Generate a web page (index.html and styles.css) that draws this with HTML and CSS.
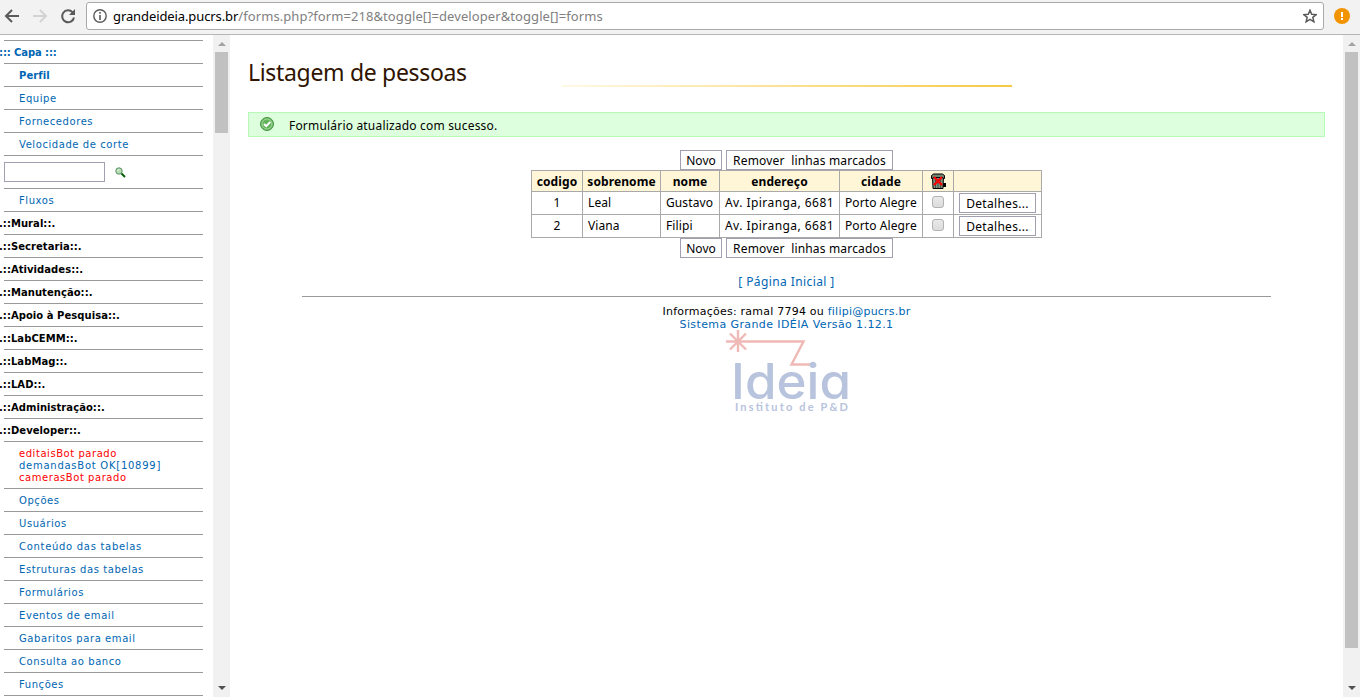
FILE: index.html
```html
<!DOCTYPE html>
<html lang="pt-BR">
<head>
<meta charset="utf-8">
<title>Listagem de pessoas</title>
<link rel="stylesheet" href="styles.css">
</head>
<body>
<header class="toolbar">
  <svg class="nav-icons" width="86" height="34" fill="none" stroke="#5a5a5a" stroke-width="2">
    <path d="M19 16H6.500M12 10L6 16l6 6"/>
    <path stroke="#d3d3d3" d="M33 16h12.500M40 10l6 6-6 6"/>
    <path d="M72.600 12.300A6 6 0 1 0 74 17.500"/>
    <path d="M75 9v6h-6z" fill="#5a5a5a" stroke="none"/>
  </svg>
  <div class="address">
    <svg class="info" width="14" height="14" fill="none" stroke="#5a5a5a"><circle cx="7" cy="7" r="6.200" stroke-width="1.400"/><path stroke-width="1.600" d="M7 6v5M7 3v1.700"/></svg>
    <span class="url"><span class="host">grandeideia.pucrs.br</span><span class="path">/forms.php?form=218&amp;toggle[]=developer&amp;toggle[]=forms</span></span>
    <svg class="star" width="14" height="14" fill="none" stroke="#5a5a5a" stroke-width="1.500"><path d="M7 1.200l1.700 4.100 4.500.3-3.400 2.800 1.100 4.400L7 10.400l-3.900 2.400 1.100-4.400L.8 5.600l4.500-.3z"/></svg>
  </div>
  <svg class="alert" width="16" height="16"><circle cx="8" cy="8" r="8" fill="#f29400"/><path d="M8 4v5M8 10v2" stroke="#fff" stroke-width="2"/></svg>
</header>
<div class="frames">
  <nav class="menu">
    <a class="item top">::: Capa :::</a>
    <a class="item sub bold">Perfil</a>
    <a class="item sub">Equipe</a>
    <a class="item sub">Fornecedores</a>
    <a class="item sub">Velocidade de corte</a>
    <div class="item search"><input type="text" class="field" aria-label="Buscar">
      <svg width="11" height="11"><path d="M6 6l4 4" stroke="#075c0b" stroke-width="2"/><circle cx="4" cy="4" r="3.200" fill="#b5dcb5" stroke="#5b8f60"/><path d="M2.500 4L4 2.500" stroke="#fff"/></svg>
    </div>
    <a class="item sub">Fluxos</a>
    <a class="item group">.::Mural::.</a>
    <a class="item group">.::Secretaria::.</a>
    <a class="item group">.::Atividades::.</a>
    <a class="item group">.::Manutenção::.</a>
    <a class="item group">.::Apoio à Pesquisa::.</a>
    <a class="item group">.::LabCEMM::.</a>
    <a class="item group">.::LabMag::.</a>
    <a class="item group">.::LAD::.</a>
    <a class="item group">.::Administração::.</a>
    <a class="item group">.::Developer::.</a>
    <div class="item bots"><span class="stopped">editaisBot parado</span><span class="running">demandasBot OK[10899]</span><span class="stopped">camerasBot parado</span></div>
    <a class="item sub">Opções</a>
    <a class="item sub">Usuários</a>
    <a class="item sub wide">Conteúdo das tabelas</a>
    <a class="item sub">Estruturas das tabelas</a>
    <a class="item sub">Formulários</a>
    <a class="item sub">Eventos de email</a>
    <a class="item sub">Gabaritos para email</a>
    <a class="item sub">Consulta ao banco</a>
    <a class="item sub">Funções</a>
    <div class="item"></div>
  </nav>
  <div class="scrollbar"><i class="up"></i><i class="thumb menu-thumb"></i><i class="down"></i></div>
  <main class="content">
    <div class="heading"><h1>Listagem de pessoas</h1><i class="rule"></i></div>
    <div class="notice">
      <svg width="14" height="14"><circle cx="7" cy="7" r="6.500" fill="#64b45c" stroke="#489547"/><circle cx="7" cy="7" r="5" fill="none" stroke="#a5d99c"/><path d="M4 7l2.200 2.200L10.300 5" fill="none" stroke="#fff" stroke-width="2"/></svg>
      <span class="message">Formulário atualizado com sucesso.</span>
    </div>
    <div class="actions"><button class="btn novo">Novo</button><button class="btn remove">Remover&nbsp; linhas marcados</button></div>
    <table class="people">
      <colgroup><col class="c1"><col class="c2"><col class="c3"><col class="c4"><col class="c5"><col class="c6"><col class="c7"></colgroup>
      <tr><th>codigo</th><th>sobrenome</th><th>nome</th><th>endereço</th><th>cidade</th>
        <th><svg class="trash" width="17" height="17"><path d="M12 10h4v4h-4z" fill="#000"/><path d="M2.500 3.500h11l-.5 12H3z" fill="#7f917f" stroke="#000"/><path d="M5.500 6v9M8 6v9M10.500 6v9" stroke="#405744"/><path d="M1.500 5.500V2.500L3.500 1h9l2 1.500v3h-1.500v-1H3v1z" fill="#718572" stroke="#000"/><path d="M4 4l8 8M12 4l-8 8" stroke="#f00" stroke-width="2.200"/></svg></th><th></th></tr>
      <tr><td class="num">1</td><td>Leal</td><td>Gustavo</td><td class="street">Av. Ipiranga, 6681</td><td>Porto Alegre</td><td class="num"><i class="check"></i></td><td class="cell-btn"><button class="btn detail">Detalhes...</button></td></tr>
      <tr><td class="num">2</td><td>Viana</td><td>Filipi</td><td class="street">Av. Ipiranga, 6681</td><td>Porto Alegre</td><td class="num"><i class="check"></i></td><td class="cell-btn"><button class="btn detail">Detalhes...</button></td></tr>
    </table>
    <div class="actions after"><button class="btn novo">Novo</button><button class="btn remove">Remover&nbsp; linhas marcados</button></div>
    <a class="home">[ Página Inicial ]</a>
    <footer class="footer">
      <div class="info-line">Informações: ramal 7794 ou <a class="mail">filipi@pucrs.br</a></div>
      <a class="version">Sistema Grande IDÉIA Versão 1.12.1</a>
      <svg class="logo" width="124" height="84">
        <path d="M0 11.500H77.500L65.500 34.500H86M12 0v22M4 3.500l16 16M20 3.500l-16 16" fill="none" stroke="#efb9b5" stroke-width="2.400"/>
        <text class="brand" x="5" y="68.500" textLength="120" lengthAdjust="spacingAndGlyphs">Ideia</text>
        <text class="tagline" x="9" y="81" textLength="113">Instituto de P&amp;D</text>
      </svg>
    </footer>
  </main>
  <div class="scrollbar"><i class="up"></i><i class="thumb page-thumb"></i><i class="down"></i></div>
</div>
</body>
</html>
```
FILE: styles.css
```css
* { box-sizing: border-box; }
body { margin: 0; height: 697px; overflow: hidden; background: #fff; font: 12px "Noto Sans", sans-serif; color: #000; }
.toolbar { display: flex; height: 35px; background: #f2f2f2; border-bottom: 1px solid #b6b6b6; }
.nav-icons { flex: none; }
.address { display: flex; align-items: center; width: 1238px; height: 28px; margin-top: 2px; padding: 0 6px; background: #fff; border: 1px solid #a9a9a9; border-radius: 3px; }
.url { margin-left: 6px; font-size: 13px; white-space: nowrap; }
.host { letter-spacing: -.1px; }
.path { color: #808080; letter-spacing: .08px; }
.star { margin-left: auto; }
.alert { margin: 8px 0 0 10px; }
.frames { display: flex; height: 662px; }
.menu { width: 213px; padding: 5px 10px 0 4px; overflow: hidden; font: 10px/12px "DejaVu Sans", sans-serif; color: #0066b3; }
.item { display: block; height: 23px; padding-top: 6px; border-top: 1px solid #999; white-space: nowrap; }
.top, .group { font-weight: bold; text-indent: -5px; }
.top { letter-spacing: -.1px; }
.group { color: #000; letter-spacing: .05px; }
.sub { padding-left: 15px; letter-spacing: .57px; }
.wide { letter-spacing: .7px; }
.bold { font-weight: bold; letter-spacing: .1px; }
.search { display: flex; height: 33px; gap: 10px; }
.search svg { margin-top: 5px; }
.field { width: 101px; height: 20px; border: 1px solid #a19fb0; outline: none; }
.bots { display: flex; flex-direction: column; height: 47px; padding: 6px 0 0 15px; letter-spacing: .55px; }
.running { letter-spacing: .74px; }
.stopped { color: #f00; }
.scrollbar { width: 17px; flex: none; display: flex; flex-direction: column; align-items: center; background: #f1f1f1; padding: 7px 0; }
.up { border: 4px solid transparent; border-top: 0; border-bottom-color: #a3a3a3; }
.down { margin-top: auto; border: 4px solid transparent; border-bottom: 0; border-top-color: #505050; }
.thumb { width: 13px; margin-top: 6px; background: #c1c1c1; }
.menu-thumb { height: 81px; }
.page-thumb { height: 596px; }
.content { width: 1113px; padding: 0 18px; display: flex; flex-direction: column; align-items: center; }
.heading { width: 100%; height: 77px; display: flex; }
h1 { width: 314px; margin: 21px 0 0; font: 23px/32px "Noto Sans", sans-serif; letter-spacing: -.32px; color: #301400; white-space: nowrap; }
.rule { width: 450px; height: 2px; margin-top: 50px; background: linear-gradient(90deg, #fff9e5, #f5ca43); }
.notice { width: 100%; height: 25px; display: flex; align-items: center; gap: 15px; padding-left: 11px; background: #dfd; border: 1px solid #b7f9b7; }
.notice svg { margin-top: -1px; }
.message { padding-top: 2px; letter-spacing: .19px; }
.actions { display: flex; gap: 4px; margin-top: 13px; }
.after { margin-top: 0; }
.btn { height: 20px; padding: 1px 0 0; background: #fff; border: 1px solid #a19fb0; font: 12px/17px "Noto Sans", sans-serif; color: #000; white-space: nowrap; }
.novo { width: 42px; }
.remove { width: 167px; letter-spacing: .17px; }
.detail { width: 77px; display: block; letter-spacing: .3px; }
.people { width: 511px; table-layout: fixed; border-collapse: collapse; }
.c1 { width: 51px; } .c2 { width: 78px; } .c3 { width: 59px; } .c4 { width: 120px; } .c5 { width: 83px; } .c6 { width: 31px; } .c7 { width: 88px; }
th, td { padding: 0 0 0 5px; border: 1px solid #a9a9a9; white-space: nowrap; line-height: 16px; letter-spacing: .1px; }
th { height: 21px; padding: 1px 0 0; background: #fff5d7; text-align: center; }
td { height: 23px; }
.street { letter-spacing: .45px; }
.num { padding: 0; text-align: center; }
.trash { display: block; margin: -1px auto 0; }
.check { display: block; width: 12px; height: 12px; margin: -2px auto 0; border: 1px solid #b2b2b2; border-radius: 3px; background: linear-gradient(#e9e9e9, #dcdcdc); }
.home { height: 38px; padding-top: 15px; line-height: 17px; letter-spacing: .4px; color: #0066b3; }
.footer { width: 969px; border-top: 1px solid #999; padding-top: 8px; display: flex; flex-direction: column; align-items: center; font: 11px/13px "DejaVu Sans", sans-serif; }
.footer a { color: #0066b3; }
.info-line { letter-spacing: .23px; }
.version { letter-spacing: .4px; }
.logo { margin: -1px 0 0 2px; }
.brand { font: 500 49px Inter, sans-serif; font-feature-settings: "cv11"; fill: #b8c3dd; }
.tagline { font: bold 11px Lato, sans-serif; fill: #b8c3dd; }
```
